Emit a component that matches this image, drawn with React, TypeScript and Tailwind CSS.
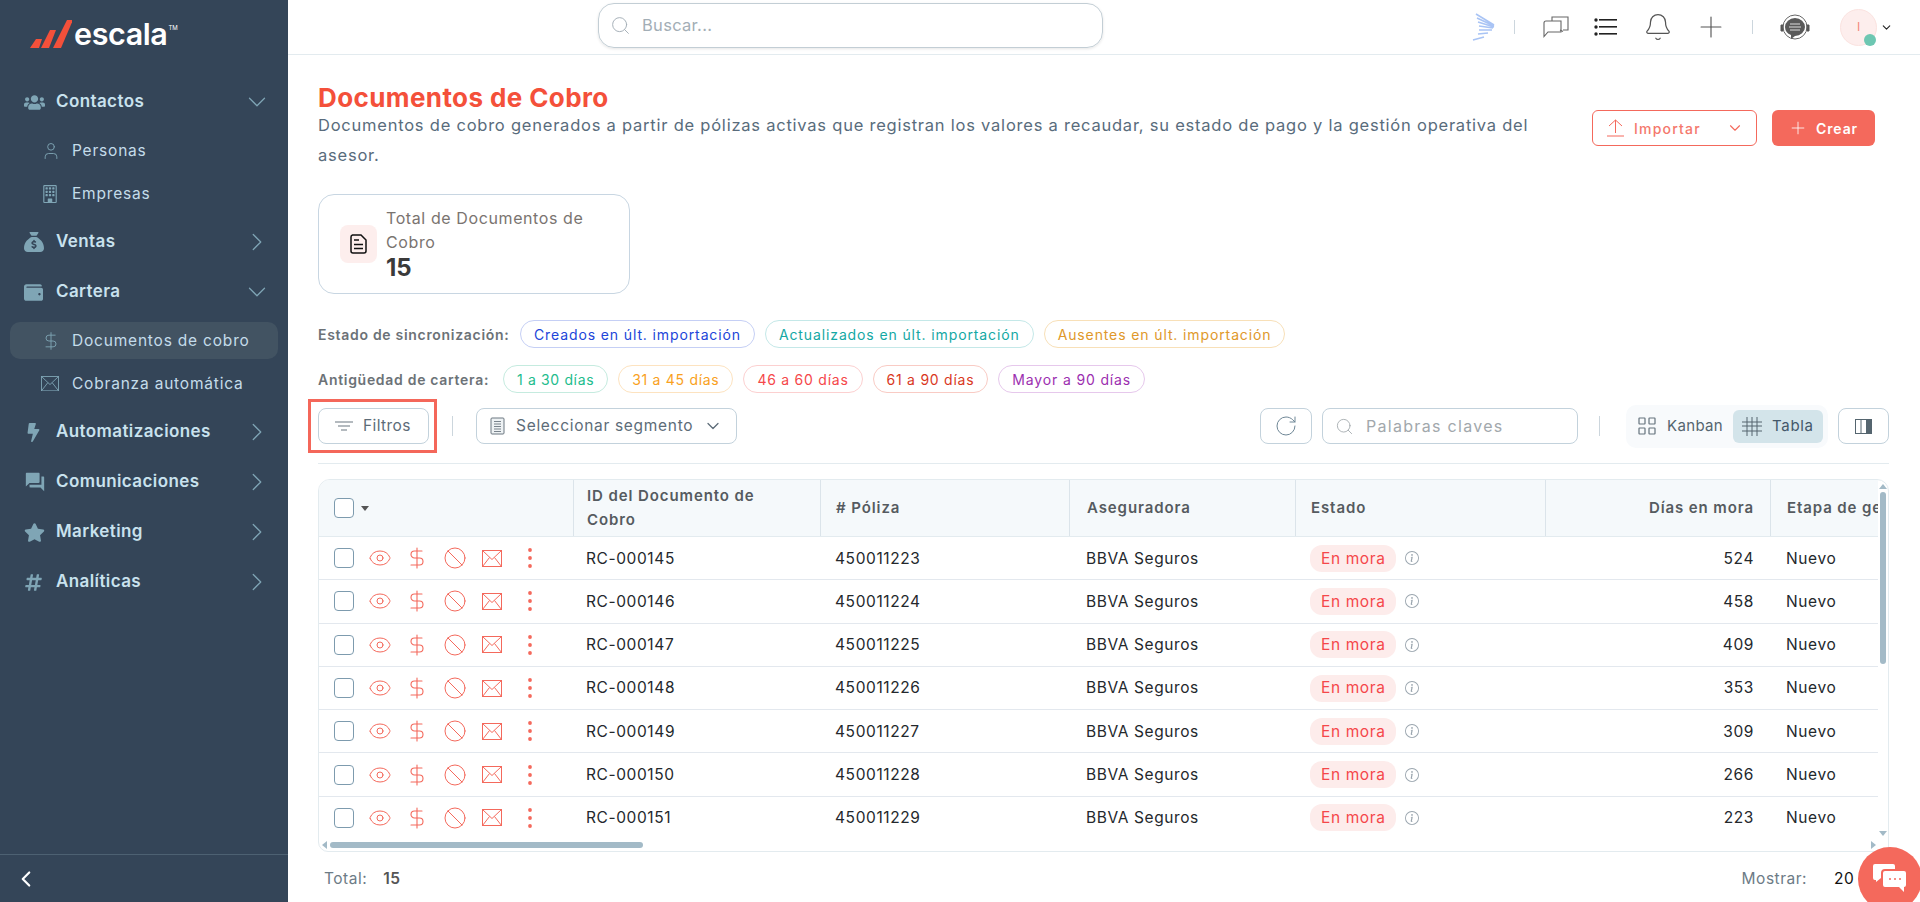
import React from "react";
import {
  Ban,
  Bell,
  ChevronDown,
  ChevronLeft,
  ChevronRight,
  DollarSign,
  Eye,
  Plus,
  RotateCw,
  Search,
  User,
} from "lucide-react";
import { FaBolt, FaHashtag, FaStar, FaUsers, FaWallet } from "react-icons/fa";
import { FaSackDollar } from "react-icons/fa6";
import { MdForum } from "react-icons/md";
import { BsBuilding, BsInfoCircle } from "react-icons/bs";

const Logo = () => (
  <div className="flex items-center h-[55px] pl-[30px] pt-[13px] text-white">
    <svg width="42" height="30" viewBox="0 0 42 30" className="mr-[2px]">
      <path d="M0 29 L6 20 L12 20 L9 29 Z" fill="#f4503a" />
      <path d="M11 29 L20 11 L26 11 L19 29 Z" fill="#f4503a" />
      <path d="M23 29 L37 1 L43 1 L31 29 Z" fill="#f4503a" />
    </svg>
    <span className="text-[30.5px] font-semibold tracking-[-0.4px] leading-none">escala</span>
    <span className="text-[6px] mb-[14px] ml-[1px]">TM</span>
  </div>
);

const MailIcon = ({ size = 20 }: { size?: number }) => (
  <svg width={size} height={size * 0.85} viewBox="0 0 20 17" fill="none" stroke="currentColor" strokeWidth="1">
    <rect x="0.5" y="0.5" width="19" height="16" />
    <path d="M0.5 0.5 L10 9.5 L19.5 0.5 M0.5 16.5 L7.5 7.5 M19.5 16.5 L12.5 7.5" />
  </svg>
);

const MainItem = ({ icon, label, open }: { icon: React.ReactNode; label: string; open?: boolean }) => (
  <div className="h-[50px] flex items-center pl-[24px] pr-[16px] text-[#c9e2ee]">
    <span className="w-[32px] text-[#7fa5b5] flex items-center">{icon}</span>
    <span className="text-[17px] font-semibold flex-1 tracking-[0.4px]">{label}</span>
    {open ? (
      <ChevronDown size={30} strokeWidth={1} className="text-[#7fa5b5]" />
    ) : (
      <ChevronRight size={30} strokeWidth={1} className="text-[#7fa5b5]" />
    )}
  </div>
);

const SubItem = ({ icon, label, active }: { icon: React.ReactNode; label: string; active?: boolean }) => (
  <div className="h-[43px] py-[3px] px-[10px]">
    <div className={`h-full flex items-center pl-[31px] rounded-[10px] text-[#c4dcea] ${active ? "bg-[#425362]" : ""}`}>
      <span className="w-[31px] text-[#7fa5b5] flex items-center">{icon}</span>
      <span className="text-[15.5px] tracking-[0.8px]">{label}</span>
    </div>
  </div>
);

const Sidebar = () => (
  <aside className="w-[288px] shrink-0 bg-[#344558] flex flex-col">
    <Logo />
    <nav className="mt-[22px]">
      <MainItem icon={<FaUsers size={21} />} label="Contactos" open />
      <div className="py-[2px]">
        <SubItem icon={<User size={20} strokeWidth={1.1} />} label="Personas" />
        <SubItem icon={<BsBuilding size={18} />} label="Empresas" />
      </div>
      <MainItem icon={<FaSackDollar size={20} />} label="Ventas" />
      <MainItem icon={<FaWallet size={19} />} label="Cartera" open />
      <div className="py-[2px]">
        <SubItem icon={<DollarSign size={20} strokeWidth={1.1} />} label="Documentos de cobro" active />
        <SubItem icon={<MailIcon size={18} />} label="Cobranza automática" />
      </div>
      <MainItem icon={<FaBolt size={19} />} label="Automatizaciones" />
      <MainItem icon={<MdForum size={22} />} label="Comunicaciones" />
      <MainItem icon={<FaStar size={21} />} label="Marketing" />
      <MainItem icon={<FaHashtag size={19} />} label="Analíticas" />
    </nav>
    <div className="mt-auto border-t border-[#4d6172] h-[48px] flex items-center pl-[13px] text-white">
      <ChevronLeft size={26} strokeWidth={2} />
    </div>
  </aside>
);

const TopBar = () => (
  <header className="h-[55px] shrink-0 border-b border-[#e3ebef] flex items-center relative pr-[27px]">
    <div className="ml-[310px] w-[505px] h-[45px] mt-[-4px] rounded-[16px] border border-[#c3ced5] shadow-[0_1px_3px_rgba(0,0,0,0.1)] flex items-center pl-[11px] text-[#a3aeb6]">
      <Search size={21} strokeWidth={1.1} />
      <span className="ml-[11px] text-[16.5px] tracking-[0.3px]">Buscar...</span>
    </div>
    <div className="ml-auto flex items-center text-[#555]">
      <svg width="24" height="28" viewBox="0 0 24 28" fill="none" stroke="#a9c4f5" strokeWidth="1.6">
        <path d="M4 1 L22 12 M5 5 L22 13 M6 9 L22 14 M7 13 L21 15 M7 17 L20 17 M6 21 L16 20 M1 27 L12 24" />
      </svg>
      <span className="w-px h-[14px] bg-[#ccd6dd] ml-[18px] mr-[28px]" />
      <svg width="26" height="22" viewBox="0 0 26 22" fill="none" stroke="#666" strokeWidth="1.1">
        <path d="M9 5 V1 H25 V14 H20 M17 14 L20 15.5" />
        <path d="M3 5 H18 V16 H5 L1 20.5 V7 a2 2 0 0 1 2 -2 Z" />
      </svg>
      <svg width="24" height="20" viewBox="0 0 24 20" className="ml-[25px]" fill="#222">
        <circle cx="2" cy="3" r="1.7" />
        <circle cx="2" cy="10" r="1.7" />
        <circle cx="2" cy="17" r="1.7" />
        <rect x="5" y="2" width="18" height="1.6" />
        <rect x="5" y="9" width="18" height="1.6" />
        <rect x="5" y="16" width="18" height="1.6" />
      </svg>
      <Bell size={30} strokeWidth={1} className="ml-[25px]" />
      <Plus size={34} strokeWidth={0.8} className="ml-[21px]" />
      <span className="w-px h-[14px] bg-[#ccd6dd] ml-[24px] mr-[27px]" />
      <svg width="30" height="30" viewBox="0 0 30 30">
        <path d="M3 13 H1 V19 H3 Z M27 13 H29 V19 H27 Z" fill="#555" stroke="#555" />
        <circle cx="15" cy="15" r="12" fill="none" stroke="#666" strokeWidth="1" />
        <path d="M5 15 a10 9 0 1 1 10 9 l-4 3 v-4 a10 9 0 0 1 -6 -8 z" fill="#5a5a5a" />
        <path d="M10 12 H20 M9 15 H21 M10 18 H20" stroke="#ddd" strokeWidth="1.2" />
      </svg>
      <div className="relative ml-[30px] w-[37px] h-[37px] rounded-full bg-[#fdeeed] border border-[#fbe3e0] flex items-center justify-center text-[#f4857a] text-[12px]">
        I
        <span className="absolute right-0 bottom-[-1px] w-[12px] h-[12px] rounded-full bg-[#6dc7b2]" />
      </div>
      <ChevronDown size={13} strokeWidth={2} className="text-[#222] ml-[3px]" />
    </div>
  </header>
);

const Chip = ({ text, cls }: { text: string; cls: string }) => (
  <span className={`h-[28px] flex items-center px-[13px] rounded-full border text-[14px] ${cls}`}>{text}</span>
);

type Row = { id: string; poliza: string; dias: number };
const rows: Row[] = [
  { id: "RC-000145", poliza: "450011223", dias: 524 },
  { id: "RC-000146", poliza: "450011224", dias: 458 },
  { id: "RC-000147", poliza: "450011225", dias: 409 },
  { id: "RC-000148", poliza: "450011226", dias: 353 },
  { id: "RC-000149", poliza: "450011227", dias: 309 },
  { id: "RC-000150", poliza: "450011228", dias: 266 },
  { id: "RC-000151", poliza: "450011229", dias: 223 },
];

const gridCols = "grid grid-cols-[254px_247px_249px_226px_250px_225px_200px]";

const Checkbox = () => <span className="w-[20px] h-[20px] rounded-[4px] border border-[#7d9bae] bg-white shrink-0" />;

const TableHead = () => (
  <div className={`${gridCols} h-[57px] bg-[#f5f9fb] border-b border-[#e3ebef] text-[15px] font-semibold text-[#555b60] tracking-[0.9px]`}>
    <div className="flex items-center pl-[15px]">
      <Checkbox />
      <span className="ml-[7px] border-x-[4.5px] border-x-transparent border-t-[5px] border-t-[#555]" />
    </div>
    <div className="flex items-center pl-[13px] leading-[24px] border-l border-[#dbe4ea] pr-[40px]">ID del Documento de Cobro</div>
    <div className="flex items-center pl-[15px] border-l border-[#dbe4ea]"># Póliza</div>
    <div className="flex items-center pl-[17px] border-l border-[#dbe4ea]">Aseguradora</div>
    <div className="flex items-center pl-[15px] border-l border-[#dbe4ea]">Estado</div>
    <div className="flex items-center justify-end pr-[16px] border-l border-[#dbe4ea]">Días en mora</div>
    <div className="flex items-center pl-[16px] border-l border-[#dbe4ea] whitespace-nowrap">Etapa de gestión</div>
  </div>
);

const TableRow = ({ row }: { row: Row }) => (
  <div className={`${gridCols} h-[43.3px] border-b border-[#e3e8ee] text-[15.5px] text-[#24282c] tracking-[0.6px] items-center`}>
    <div className="flex items-center pl-[15px] h-full text-[#f4695c]">
      <Checkbox />
      <Eye size={24} strokeWidth={1} className="ml-[14px]" />
      <DollarSign size={24} strokeWidth={1.1} className="ml-[13px]" />
      <Ban size={24} strokeWidth={1} className="ml-[14px]" />
      <span className="ml-[15px]">
        <MailIcon />
      </span>
      <svg width="4" height="20" viewBox="0 0 4 20" fill="currentColor" className="ml-[26px]">
        <circle cx="2" cy="2" r="1.9" />
        <circle cx="2" cy="10" r="1.9" />
        <circle cx="2" cy="18" r="1.9" />
      </svg>
    </div>
    <div className="pl-[13px]">{row.id}</div>
    <div className="pl-[15px]">{row.poliza}</div>
    <div className="pl-[17px]">BBVA Seguros</div>
    <div className="pl-[15px] flex items-center">
      <span className="h-[27px] flex items-center px-[11px] rounded-[12px] bg-[#fdeceb] text-[#f5474a]">En mora</span>
      <BsInfoCircle size={14} className="ml-[9px] text-[#9aa5ae]" />
    </div>
    <div className="text-right pr-[16px]">{row.dias}</div>
    <div className="pl-[16px]">Nuevo</div>
  </div>
);

const ScrollArrow = ({ cls }: { cls: string }) => <span className={`block w-0 h-0 ${cls}`} />;

const DataTable = () => (
  <div className="mt-[15px] h-[373px] rounded-t-[12px] rounded-bl-[10px] border border-[#e3ebef] flex flex-col overflow-hidden shrink-0">
    <div className="flex flex-1 min-h-0">
      <div className="flex-1 min-w-0 overflow-hidden">
        <TableHead />
        {rows.map((r) => (
          <TableRow key={r.id} row={r} />
        ))}
      </div>
      <div className="w-[10px] shrink-0 flex flex-col items-center pt-[4px]">
        <ScrollArrow cls="border-x-[4px] border-x-transparent border-b-[5px] border-b-[#a3bac7]" />
        <span className="mt-[3px] w-[6px] h-[172px] rounded-full bg-[#a3bac7]" />
        <span className="mt-auto mb-[3px]">
          <ScrollArrow cls="border-x-[4px] border-x-transparent border-t-[5px] border-t-[#a3bac7]" />
        </span>
      </div>
    </div>
    <div className="h-[12px] shrink-0 flex items-center pl-[3px] pr-[12px]">
      <ScrollArrow cls="border-y-[4px] border-y-transparent border-r-[5px] border-r-[#a3bac7]" />
      <span className="ml-[3px] w-[313px] h-[6px] rounded-full bg-[#a3bac7]" />
      <span className="ml-auto">
        <ScrollArrow cls="border-y-[4px] border-y-transparent border-l-[5px] border-l-[#a3bac7]" />
      </span>
    </div>
  </div>
);

const Toolbar = () => (
  <div className="mt-[15px] flex items-center h-[36px] text-[#5d6c78]">
    <div className="relative">
      <button className="w-[111px] h-[36px] rounded-[8px] border border-[#c3d2dc] flex items-center pl-[16px] text-[15.5px] tracking-[0.4px]">
        <svg width="18" height="10" viewBox="0 0 18 10" stroke="#6b7680" strokeWidth="1.1" className="mr-[10px]">
          <path d="M0 1 H18 M3 5 H15 M6 9 H12" />
        </svg>
        Filtros
      </button>
      <span className="absolute left-[-10px] top-[-9px] w-[129px] h-[54px] border-[3px] border-[#f4675a]" />
    </div>
    <span className="w-px h-[20px] bg-[#ccd6dd] ml-[23px] mr-[23px]" />
    <button className="w-[261px] h-[36px] rounded-[8px] border border-[#c3d2dc] flex items-center pl-[13px] text-[15.5px] tracking-[0.7px]">
      <svg width="15" height="18" viewBox="0 0 15 18" fill="none" stroke="#6b7680" className="mr-[11px]">
        <rect x="1" y="1" width="13" height="16" rx="1" fill="#eef2f4" />
        <path d="M4 4.5 H11 M4 7 H11 M4 9.5 H11 M4 12 H11 M4 14.5 H11" strokeWidth="0.9" />
      </svg>
      Seleccionar segmento
      <ChevronDown size={20} strokeWidth={1.5} className="ml-auto mr-[13px]" />
    </button>
    <button className="ml-auto w-[52px] h-[36px] rounded-[8px] border border-[#c3d2dc] flex items-center justify-center text-[#6f8796]">
      <RotateCw size={24} strokeWidth={1} />
    </button>
    <div className="ml-[10px] w-[256px] h-[36px] rounded-[8px] border border-[#c3d2dc] flex items-center pl-[12px] text-[#a2a8ac]">
      <Search size={19} strokeWidth={1.1} />
      <span className="ml-[12px] text-[16px] tracking-[1.3px]">Palabras claves</span>
    </div>
    <span className="w-px h-[20px] bg-[#ccd6dd] ml-[21px] mr-[26px]" />
    <div className="w-[202px] h-[43px] rounded-[10px] bg-[#f8fafc] flex items-center pl-[12px] pr-[5px] text-[#55656f] text-[15px] tracking-[0.35px]">
      <svg width="18" height="18" viewBox="0 0 18 18" fill="none" stroke="#64727c" strokeWidth="1.2">
        <rect x="1" y="1" width="6" height="6" rx="0.5" />
        <rect x="11" y="1" width="6" height="6" rx="0.5" />
        <rect x="1" y="11" width="6" height="6" rx="0.5" />
        <rect x="11" y="11" width="6" height="6" rx="0.5" />
      </svg>
      <span className="ml-[11px]">Kanban</span>
      <div className="ml-auto w-[90px] h-[33px] rounded-[6px] bg-[#d3e4ea] flex items-center pl-[9px] text-[#44586a]">
        <svg width="20" height="20" viewBox="0 0 20 20" fill="none" stroke="#55656f" strokeWidth="1">
          <path d="M0 6 H20 M0 10 H20 M0 15 H20 M5 1 V20 M10 1 V20 M15 1 V20" />
        </svg>
        <span className="ml-[10px] tracking-[0.7px]">Tabla</span>
      </div>
    </div>
    <button className="ml-[10px] w-[51px] h-[36px] rounded-[8px] border border-[#c3d2dc] flex items-center justify-center">
      <svg width="17" height="15" viewBox="0 0 17 15">
        <rect x="0.5" y="0.5" width="16" height="14" fill="none" stroke="#55656f" />
        <path d="M6 0.5 V14.5" stroke="#55656f" />
        <rect x="11" y="0.5" width="5.5" height="14" fill="#55656f" />
      </svg>
    </button>
  </div>
);

const App: React.FC = () => {
  return (
    <div className="h-screen flex overflow-hidden bg-white font-[Inter,sans-serif]">
      <Sidebar />
      <main className="flex-1 min-w-0 flex flex-col">
        <TopBar />
        <div className="flex-1 pl-[30px] pr-[31px] flex flex-col">
          <div className="flex items-start pt-[28px]">
            <div className="w-[1250px]">
              <h1 className="text-[26px] font-bold text-[#f4503a] leading-[30px] tracking-[0.4px]">Documentos de Cobro</h1>
              <p className="text-[16.5px] leading-[30px] text-[#596c7c] tracking-[0.77px] mt-[-3px]">
                Documentos de cobro generados a partir de pólizas activas que registran los valores a recaudar, su estado de pago y la gestión operativa del asesor.
              </p>
            </div>
            <button className="ml-[24px] mt-[27px] w-[165px] h-[36px] rounded-[6px] border border-[#f4695c] flex items-center pl-[14px] text-[#f4786c] text-[14px] font-medium tracking-[1.2px]">
              <svg width="17" height="18" viewBox="0 0 17 18" fill="none" stroke="#f4695c" strokeWidth="1" className="mr-[10px]">
                <path d="M0 17 H17 M8.5 14 V1 M2 7 L8.5 1 L15 7" />
              </svg>
              Importar
              <ChevronDown size={18} strokeWidth={1.5} className="ml-auto mr-[12px] text-[#f4695c]" />
            </button>
            <button className="ml-[15px] mt-[27px] w-[103px] h-[36px] rounded-[6px] bg-[#f4695c] flex items-center pl-[16px] text-white text-[14px] font-semibold tracking-[0.9px]">
              <Plus size={20} strokeWidth={1} className="mr-[8px]" />
              Crear
            </button>
          </div>

          <div className="mt-[24px] w-[312px] h-[100px] rounded-[16px] border border-[#c8d6e2] flex items-center pl-[21px] shrink-0">
            <span className="w-[37px] h-[38px] rounded-[8px] bg-[#fdeeed] flex items-center justify-center shrink-0">
              <svg width="17" height="20" viewBox="0 0 17 20" fill="none" stroke="#111" strokeWidth="1.5">
                <path d="M2.5 1 H11 L16 6 V17 a2 2 0 0 1 -2 2 H3 a2 2 0 0 1 -2 -2 V3 a2 2 0 0 1 1.5 -2 Z" />
                <path d="M4 6 H9 M4 10.5 H13 M4 14.5 H13" />
              </svg>
            </span>
            <div className="ml-[9px]">
              <div className="text-[16px] leading-[24px] text-[#7a7470] tracking-[0.6px] w-[220px]">Total de Documentos de Cobro</div>
              <div className="text-[24px] font-bold text-[#3a3a3a] leading-[28px]">15</div>
            </div>
          </div>

          <div className="mt-[26px] flex items-center gap-[10px]">
            <span className="text-[14px] font-semibold text-[#6c7277] tracking-[0.7px] w-[192px] whitespace-nowrap">Estado de sincronización:</span>
            <Chip text="Creados en últ. importación" cls="tracking-[0.88px] border-[#c5cff5] text-[#2145d9]" />
            <Chip text="Actualizados en últ. importación" cls="tracking-[0.88px] border-[#c4e8e8] text-[#14a8a4]" />
            <Chip text="Ausentes en últ. importación" cls="tracking-[0.88px] border-[#f8e0b8] text-[#e0982a]" />
          </div>
          <div className="mt-[17px] flex items-center gap-[10px]">
            <span className="text-[14px] font-semibold text-[#6c7277] tracking-[0.7px] w-[175px] whitespace-nowrap">Antigüedad de cartera:</span>
            <Chip text="1 a 30 días" cls="tracking-[0.65px] border-[#c5ebdf] text-[#22bc8d]" />
            <Chip text="31 a 45 días" cls="tracking-[0.7px] border-[#fde3c0] text-[#f9a11e]" />
            <Chip text="46 a 60 días" cls="tracking-[0.75px] border-[#fcd0d0] text-[#f5474a]" />
            <Chip text="61 a 90 días" cls="tracking-[0.75px] border-[#f9cbc4] text-[#d9381e]" />
            <Chip text="Mayor a 90 días" cls="tracking-[0.85px] border-[#e6c8ec] text-[#9c2fb0]" />
          </div>

          <Toolbar />
          <div className="mt-[19px] h-px bg-[#e3ebef] shrink-0" />
          <DataTable />

          <div className="mt-[15px] flex items-center text-[15.5px] text-[#6d7b86] pl-[6px] tracking-[0.5px]">
            <span>Total:</span>
            <span className="ml-[16px] font-semibold text-[#555]">15</span>
            <span className="ml-auto">Mostrar:</span>
            <span className="ml-[27px] w-[55px] text-[#111]">20</span>
          </div>
        </div>
      </main>
      <button className="fixed right-[-2px] bottom-[-9px] w-[64px] h-[64px] rounded-full bg-[#f4695c] flex items-center justify-center">
        <svg width="34" height="30" viewBox="0 0 34 30" className="mb-[3px]">
          <path d="M2 1 H20 a2 2 0 0 1 2 2 V6 H12 a4 4 0 0 0 -4 4 V15 L3 19 V17 H2 a2 2 0 0 1 -2 -2 V3 a2 2 0 0 1 2 -2 Z" fill="#fff" />
          <path d="M12 8 H31 a2 2 0 0 1 2 2 V22 a2 2 0 0 1 -2 2 V29 L26 24 H12 a2 2 0 0 1 -2 -2 V10 a2 2 0 0 1 2 -2 Z" fill="#fff" />
          <circle cx="17" cy="16" r="1" fill="#f4695c" />
          <circle cx="22" cy="16" r="1" fill="#f4695c" />
          <circle cx="27" cy="16" r="1" fill="#f4695c" />
        </svg>
      </button>
    </div>
  );
};

export default App;
